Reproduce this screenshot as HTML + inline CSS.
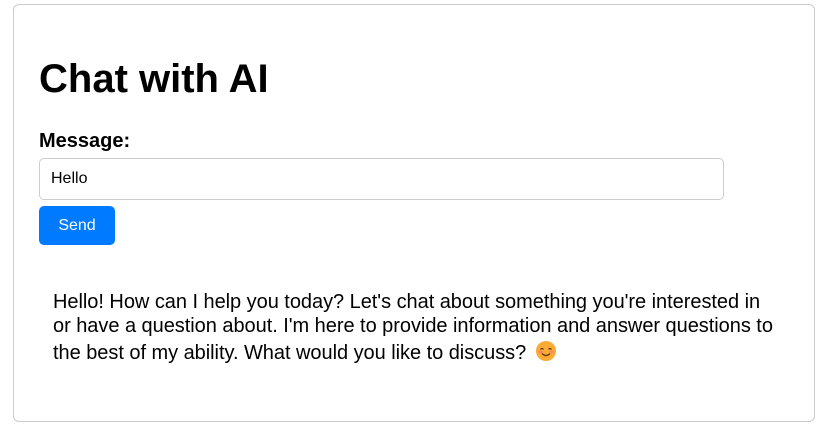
<!DOCTYPE html>
<html><head><meta charset="utf-8"><style>
html,body{margin:0;padding:0;background:#fff;width:832px;height:431px;overflow:hidden;font-family:"Liberation Sans",Arial,sans-serif;color:#000}
.box{position:absolute;left:13px;top:4px;width:800px;height:416px;border:1px solid #ccc;border-radius:6px}
h1{position:absolute;left:39px;top:56px;margin:0;font-size:40px;font-weight:bold;line-height:46px}
.lbl{position:absolute;left:39px;top:130px;font-size:20px;font-weight:bold;line-height:23px}
.inp{position:absolute;left:39px;top:158px;border:1px solid #ccc;border-radius:5px;box-sizing:border-box;width:685px;height:42px;font-size:16px;line-height:40px;padding-left:11px}
.btn{position:absolute;left:39px;top:206px;width:76px;height:39px;background:#007bff;border-radius:5px;color:#fff;font-size:16px;line-height:39px;text-align:center}
.resp{position:absolute;left:53px;top:290px;font-size:20px;line-height:24px;white-space:nowrap;letter-spacing:-0.04px}
.l3{position:absolute;left:53px;top:341px;font-size:20px;line-height:24px;white-space:nowrap;letter-spacing:-0.04px}
svg{position:absolute;left:536px;top:341px}
</style></head><body>
<div class="box"></div>
<h1>Chat with AI</h1>
<div class="lbl">Message:</div>
<div class="inp">Hello</div>
<div class="btn">Send</div>
<div class="resp">Hello! How can I help you today? Let's chat about something you're interested in<br>or have a question about. I'm here to provide information and answer questions to</div>
<div class="l3">the best of my ability. What would you like to discuss?</div>
<svg width="20" height="20" viewBox="0 0 20 20"><circle cx="10" cy="10" r="10" fill="#fbaa35"/><ellipse cx="4.5" cy="11" rx="2.2" ry="1.4" fill="#f77" opacity=".7"/><ellipse cx="15.5" cy="11" rx="2.2" ry="1.4" fill="#f77" opacity=".7"/><path d="M4.5 8.5q1.5-2 3 0M12.5 8.5q1.5-2 3 0" stroke="#6b3a10" stroke-width="1.2" fill="none"/><path d="M6 12.5q4 4 8 0" stroke="#6b3a10" stroke-width="1.3" fill="none"/></svg>
</body></html>
